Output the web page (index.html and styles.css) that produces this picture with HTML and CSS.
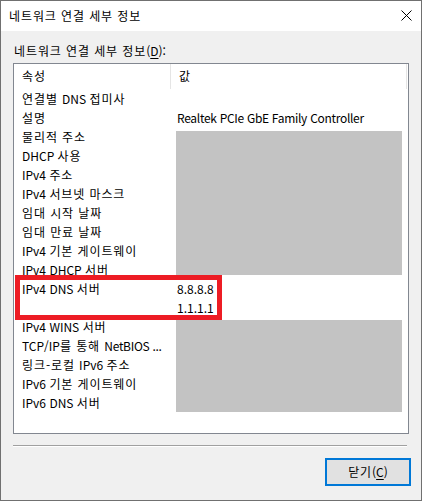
FILE: index.html
```html
<!DOCTYPE html>
<html lang="ko">
<head>
<meta charset="utf-8">
<title>네트워크 연결 세부 정보</title>
<link rel="stylesheet" href="styles.css">
</head>
<body>
<div class="window">
  <div class="titlebar">
    <span class="title"><span class="ko">네트워크 연결 세부 정보</span></span>
    <svg class="close" width="11" height="11" viewBox="0 0 11 11"><path d="M0.5 0.5 L10.5 10.5 M10.5 0.5 L0.5 10.5" stroke="#000" stroke-width="1" fill="none"/></svg>
  </div>
  <div class="content">
    <div class="label"><span class="ko">네트워크 연결 세부 정보</span>(<u>D</u>):</div>
    <div class="list">
      <div class="header">
        <div class="hcell c1"><span class="ko">속성</span></div>
        <div class="hcell c2"><span class="ko">값</span></div>
      </div>
      <div class="rows">
        <div class="row"><span class="k"><span class="ko">연결별 </span>DNS <span class="ko">접미사</span></span><span class="v"></span></div>
        <div class="row"><span class="k"><span class="ko">설명</span></span><span class="v narrow">Realtek PCIe GbE Family Controller</span></div>
        <div class="row"><span class="k"><span class="ko">물리적 주소</span></span><span class="v"></span></div>
        <div class="row"><span class="k">DHCP <span class="ko">사용</span></span><span class="v"></span></div>
        <div class="row"><span class="k">IPv4 <span class="ko">주소</span></span><span class="v"></span></div>
        <div class="row"><span class="k">IPv4 <span class="ko">서브넷 마스크</span></span><span class="v"></span></div>
        <div class="row"><span class="k"><span class="ko">임대 시작 날짜</span></span><span class="v"></span></div>
        <div class="row"><span class="k"><span class="ko">임대 만료 날짜</span></span><span class="v"></span></div>
        <div class="row"><span class="k">IPv4 <span class="ko">기본 게이트웨이</span></span><span class="v"></span></div>
        <div class="row"><span class="k">IPv4 DHCP <span class="ko">서버</span></span><span class="v"></span></div>
        <div class="row"><span class="k">IPv4 DNS <span class="ko">서버</span></span><span class="v">8.8.8.8</span></div>
        <div class="row"><span class="k"></span><span class="v">1.1.1.1</span></div>
        <div class="row"><span class="k">IPv4 WINS <span class="ko">서버</span></span><span class="v"></span></div>
        <div class="row"><span class="k">TCP/IP<span class="ko">를 통해 </span><span class="narrow">NetBIOS ...</span></span><span class="v"></span></div>
        <div class="row"><span class="k"><span class="ko">링크-로컬 </span>IPv6 <span class="ko">주소</span></span><span class="v"></span></div>
        <div class="row"><span class="k">IPv6 <span class="ko">기본 게이트웨이</span></span><span class="v"></span></div>
        <div class="row"><span class="k">IPv6 DNS <span class="ko">서버</span></span><span class="v"></span></div>
      </div>
      <div class="redact r1"></div>
      <div class="redact r2"></div>
      <div class="highlight"></div>
    </div>
    <div class="sep"></div>
    <div class="buttons">
      <button class="btn"><span class="ko">닫기</span>(<u>C</u>)</button>
    </div>
  </div>
</div>
</body>
</html>
```

FILE: styles.css
```css
* { box-sizing: border-box; }
html, body { margin: 0; padding: 0; background: #ffffff; }
body {
  font-family: "Noto Sans CJK KR", "Noto Sans", sans-serif;
  font-size: 12px;
  color: #000;
}
.ko { letter-spacing: 0.9px; }
.narrow { letter-spacing: -0.3px; }
.window {
  width: 422px;
  height: 501px;
  border: 1px solid #707070;
  display: flex;
  flex-direction: column;
  background: #f0f0f0;
}
.titlebar {
  height: 30px;
  background: #fff;
  display: flex;
  align-items: center;
  justify-content: space-between;
  padding: 0 9px 0 8px;
}
.title { line-height: 16px; padding-bottom: 1px; }
.close { display: block; margin-top: -1px; }
.content {
  flex: 1;
  padding: 12px 12px 0 12px;
  display: flex;
  flex-direction: column;
}
.label { line-height: 16px; height: 16px; margin-bottom: 4px; padding-left: 1px; }
.label u, .btn u { text-decoration: underline; text-underline-offset: 2px; }
.list {
  position: relative;
  width: 396px;
  height: 371px;
  background: #fff;
  border: 1px solid #828790;
}
.header {
  display: flex;
  height: 25px;
}
.hcell {
  line-height: 24px;
  padding-left: 8px;
}
.hcell.c1 { width: 157px; border-right: 1px solid #e5e5e5; }
.hcell.c2 { width: 236px; border-right: 1px solid #e5e5e5; padding-left: 8px; }
.rows { display: flex; flex-direction: column; }
.row { display: flex; height: 19px; line-height: 19px; white-space: nowrap; }
.row .k { width: 157px; padding-left: 8px; overflow: hidden; }
.row .v { padding-left: 6px; }
.redact {
  position: absolute;
  background: #c3c3c3;
  left: 162px;
  width: 226px;
}
.r1 { top: 67px; height: 144px; }
.r2 { top: 256px; height: 92px; }
.highlight {
  position: absolute;
  left: 1px;
  top: 211px;
  width: 207px;
  height: 45px;
  border: 5px solid #ed1c24;
}
.sep {
  margin-top: 11px;
  width: 394px;
  height: 2px;
  border-top: 1px solid #a0a0a0;
  border-bottom: 1px solid #fff;
}
.buttons {
  margin-top: 11px;
  display: flex;
  justify-content: flex-end;
  width: 398px;
}
.btn {
  width: 86px;
  height: 28px;
  background: #e1e1e1;
  border: 2px solid #0078d7;
  font-family: "Noto Sans CJK KR", "Noto Sans", sans-serif;
  font-size: 12px;
  color: #000;
  padding: 0;
  line-height: 20px;
}
```
